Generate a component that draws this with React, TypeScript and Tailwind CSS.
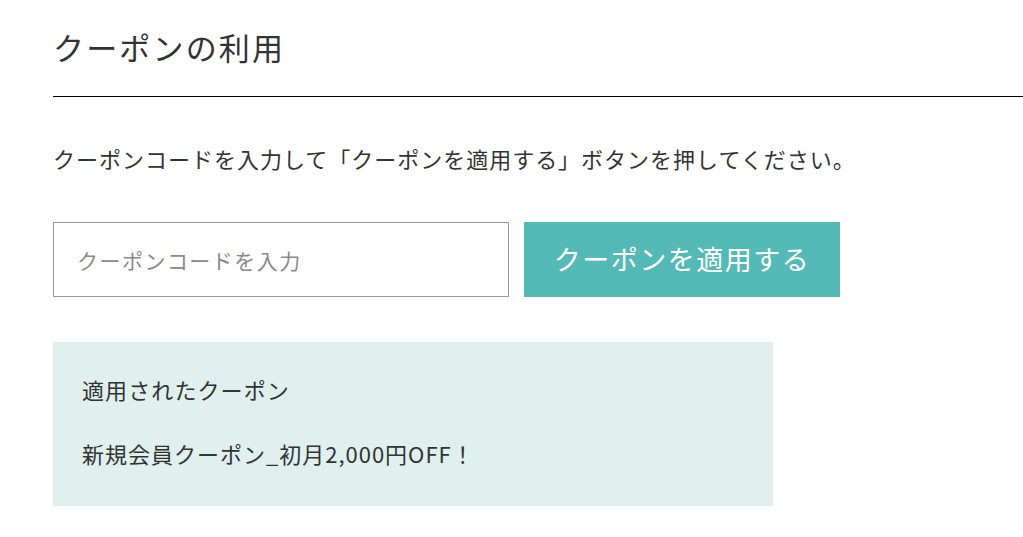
// @ts-nocheck
import * as React from 'react';

const font = { fontFamily: '"Noto Sans CJK JP", "Noto Sans", sans-serif' };

export default function App() {
  return (
    <div className="min-h-screen bg-white pl-[53px] pt-[26px] text-[#333]" style={font}>
      <div className="border-b border-black pb-[29px]">
        <h1 className="text-[31px] leading-[41px] tracking-[0.07em] font-normal">クーポンの利用</h1>
      </div>

      <p className="mt-[46px] text-[22px] leading-[30px] tracking-[0.045em]">
        クーポンコードを入力して「クーポンを適用する」ボタンを押してください。
      </p>

      <div className="mt-[49px] flex gap-[15px]">
        <input
          placeholder="クーポンコードを入力"
          className="w-[456px] h-[75px] border border-[#9a9a9a] px-[23px] text-[21px] tracking-[0.07em] placeholder:text-[#8a8a8a] outline-none"
          style={font}
        />
        <button className="w-[316px] h-[75px] bg-[#55b9b5] text-white text-[27px] tracking-[0.055em]" style={font}>
          クーポンを適用する
        </button>
      </div>

      <div className="mt-[45px] w-[720px] bg-[#dff0ef] pl-[29px] pt-[32px] pb-[38px]">
        <p className="text-[22px] leading-[30px] tracking-[0.05em]">適用されたクーポン</p>
        <p className="mt-[34px] text-[22px] leading-[30px] tracking-[0.045em]">新規会員クーポン_初月2,000円OFF！</p>
      </div>
    </div>
  );
}
